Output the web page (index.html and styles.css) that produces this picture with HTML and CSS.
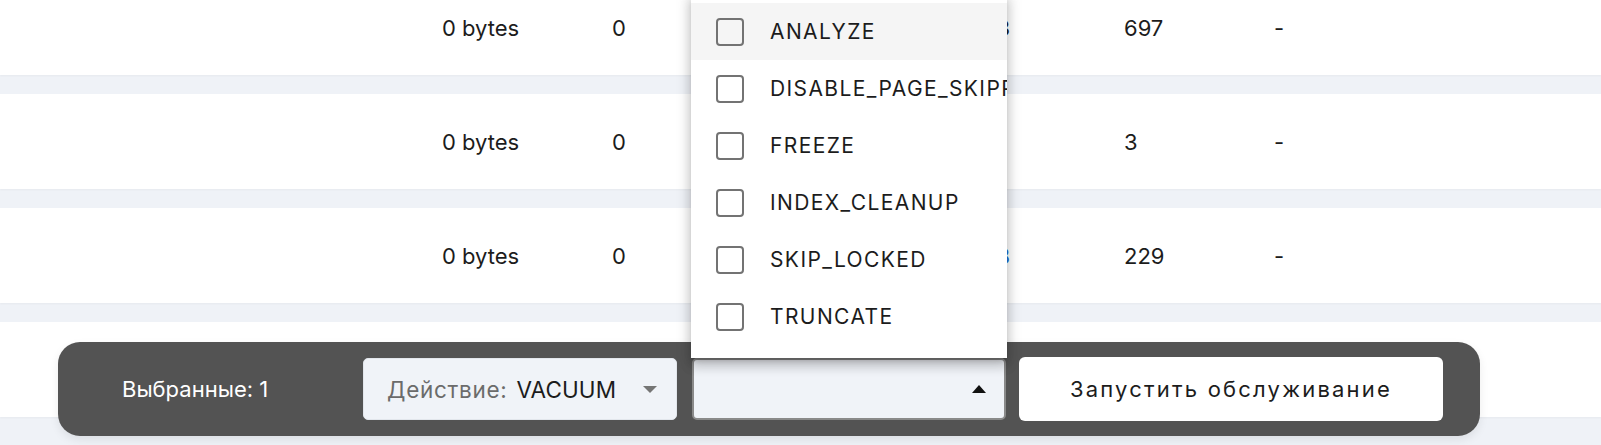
FILE: index.html
```html
<!DOCTYPE html>
<html lang="ru">
<head>
<meta charset="utf-8">
<title>Maintenance</title>
<link rel="stylesheet" href="styles.css">
</head>
<body>
<div class="page">
  <div class="rows">
    <div class="row">
      <span></span><span>0 bytes</span><span>0</span><span class="num-r">13</span><span></span><span>697</span><span>-</span>
    </div>
    <div class="row">
      <span></span><span>0 bytes</span><span>0</span><span class="num-r"></span><span></span><span>3</span><span>-</span>
    </div>
    <div class="row">
      <span></span><span>0 bytes</span><span>0</span><span class="num-r link">8</span><span></span><span>229</span><span>-</span>
    </div>
    <div class="row">
      <span></span><span></span><span></span><span></span><span></span><span></span><span></span>
    </div>
  </div>

  <div class="bar">
    <div class="bar-inner">
      <div class="selected">Выбранные: 1</div>
      <div class="select select-action">
        <span class="select-label">Действие:</span>
        <span class="select-value">VACUUM</span>
        <span class="tri tri-down"></span>
      </div>
      <div class="select select-options">
        <span class="tri tri-up"></span>
      </div>
      <button class="run-btn">Запустить обслуживание</button>
    </div>
  </div>

  <ul class="menu">
    <li class="menu-item active"><span class="cb"></span><span class="mi-text">ANALYZE</span></li>
    <li class="menu-item"><span class="cb"></span><span class="mi-text">DISABLE_PAGE_SKIPPING</span></li>
    <li class="menu-item"><span class="cb"></span><span class="mi-text">FREEZE</span></li>
    <li class="menu-item"><span class="cb"></span><span class="mi-text">INDEX_CLEANUP</span></li>
    <li class="menu-item"><span class="cb"></span><span class="mi-text">SKIP_LOCKED</span></li>
    <li class="menu-item"><span class="cb"></span><span class="mi-text">TRUNCATE</span></li>
  </ul>
</div>
</body>
</html>
```

FILE: styles.css
```css
* { box-sizing: border-box; }

html, body {
  margin: 0;
  padding: 0;
}

body {
  width: 1601px;
  height: 445px;
  overflow: hidden;
  background: #eff2f7;
  font-family: Inter, "Noto Sans", sans-serif;
  font-size: 22px;
  color: #1c1c1c;
}

.page {
  position: relative;
  width: 1601px;
  height: 445px;
  overflow: hidden;
}

.rows {
  display: flex;
  flex-direction: column;
  gap: 19px;
  margin-top: -20px;
}

.row {
  height: 95px;
  background: #ffffff;
  display: grid;
  grid-template-columns: 442px 170px 188px 210px 114px 150px 1fr;
  align-items: center;
  box-shadow: 0 1px 2px rgba(0, 0, 0, 0.04);
}

.row span {
  white-space: nowrap;
  line-height: 26px;
}

.num-r { text-align: right; }
.link { color: #1f6fd6; }

/* bottom action bar */
.bar {
  position: absolute;
  left: 58px;
  top: 342px;
  width: 1422px;
  height: 94px;
  background: #535353;
  border-radius: 22px;
  box-shadow: 0 4px 10px rgba(0, 0, 0, 0.08);
}

.bar-inner {
  height: 100%;
  display: flex;
  align-items: center;
  padding: 0 37px 0 64px;
}

.selected {
  width: 241px;
  color: #ffffff;
  font-size: 22px;
  white-space: nowrap;
}

.select {
  height: 62px;
  width: 314px;
  background: #f0f3f8;
  border-radius: 5px;
  display: flex;
  align-items: center;
  position: relative;
  font-size: 22.5px;
}

.select-action {
  border: 1px solid #e2e6ec;
  padding-left: 23px;
  margin-right: 15px;
}

.select-label {
  color: #6b6b6b;
  letter-spacing: 0.7px;
  margin-right: 9px;
}

.select-value {
  color: #1c1c1c;
  letter-spacing: 0.1px;
}

.select-options {
  border: 2px solid #8a8a8a;
  margin-right: 13px;
}

.tri {
  position: absolute;
  width: 0;
  height: 0;
  border-left: 7px solid transparent;
  border-right: 7px solid transparent;
}

.tri-down {
  right: 19px;
  top: 27px;
  border-top: 7px solid #757575;
}

.tri-up {
  right: 18px;
  top: 25px;
  border-bottom: 8px solid #111111;
}

.run-btn {
  width: 424px;
  height: 64px;
  background: #ffffff;
  border: none;
  border-radius: 6px;
  font-family: Inter, "Noto Sans", sans-serif;
  font-size: 22px;
  letter-spacing: 2.2px;
  color: #1c1c1c;
  padding: 0;
  cursor: pointer;
}

/* options popover */
.menu {
  position: absolute;
  left: 691px;
  top: -7px;
  width: 316px;
  margin: 0;
  padding: 10px 0 13px;
  list-style: none;
  background: #ffffff;
  overflow: hidden;
  box-shadow: 0 5px 5px -3px rgba(0, 0, 0, 0.2), 0 8px 10px 1px rgba(0, 0, 0, 0.14), 0 3px 14px 2px rgba(0, 0, 0, 0.12);
}

.menu-item {
  height: 57px;
  display: flex;
  align-items: center;
  padding-left: 25px;
  white-space: nowrap;
}

.menu-item.active {
  background: #f5f5f5;
}

.cb {
  flex: 0 0 auto;
  width: 28px;
  height: 28px;
  border: 2.6px solid #737373;
  border-radius: 4px;
  margin-right: 26px;
}

.mi-text {
  font-size: 21px;
  letter-spacing: 1.4px;
  color: #1c1c1c;
}
```
